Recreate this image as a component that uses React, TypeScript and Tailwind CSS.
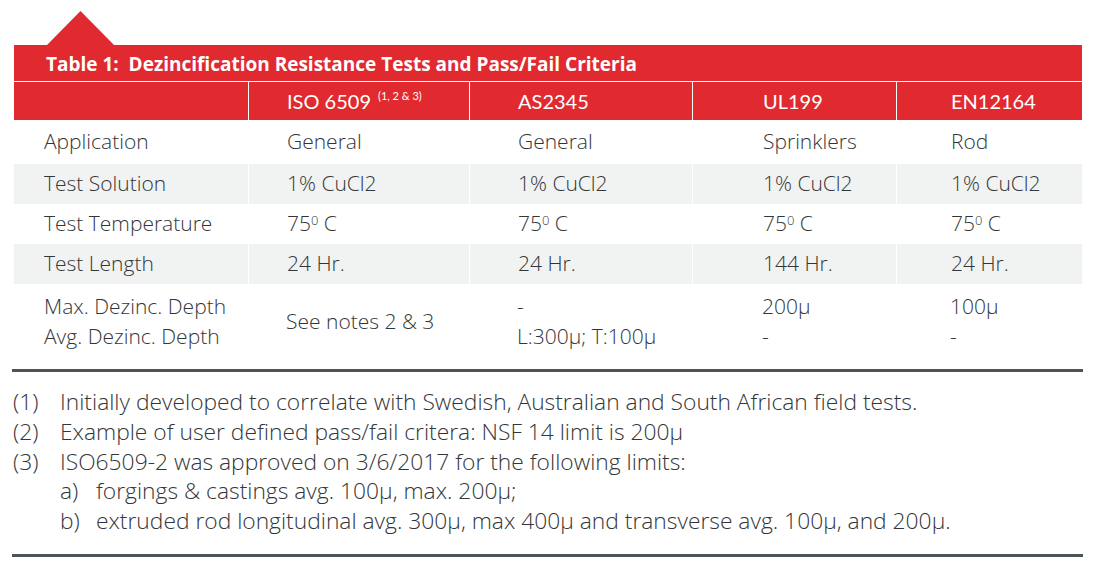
import React from "react";

const lato = { fontFamily: "Lato, 'Noto Sans', sans-serif" };
const open = { fontFamily: "'Open Sans', 'Noto Sans', sans-serif" };

const cols = ["w-[234px] pl-[30px]", "w-[221px] pl-[38px]", "w-[223px] pl-[48px]", "w-[204px] pl-[70px]", "w-[186px] pl-[54px]"];

function Deg() {
  return (
    <span>
      75<sup className="text-[13px]">0</sup> C
    </span>
  );
}

const rows: { cells: React.ReactNode[]; gray: boolean; h: string }[] = [
  { cells: ["Application", "General", "General", "Sprinklers", "Rod"], gray: false, h: "h-[44px]" },
  { cells: ["Test Solution", "1% CuCl2", "1% CuCl2", "1% CuCl2", "1% CuCl2"], gray: true, h: "h-[40px]" },
  { cells: ["Test Temperature", <Deg key="a" />, <Deg key="b" />, <Deg key="c" />, <Deg key="d" />], gray: false, h: "h-[40px]" },
  { cells: ["Test Length", "24 Hr.", "24 Hr.", "144 Hr.", "24 Hr."], gray: true, h: "h-[40px]" },
];

export default function App() {
  return (
    <div className="w-[1095px] h-[576px] bg-white text-[#333638] overflow-hidden" style={lato}>
      <div className="pt-[11px]">
        <div className="ml-[14px] w-[1068px]">
          <div className="pl-[33px] flex">
            <svg width="67" height="34" viewBox="0 0 67 34" className="block">
              <polygon points="0,34 33.5,0 67,34" fill="#e02a30" />
            </svg>
          </div>
          <div
            className="h-[36px] bg-[#e02a30] flex items-center pl-[32px] pt-[2px] text-white font-bold text-[19px] whitespace-pre"
            style={open}
          >
            {"Table 1:  Dezincification Resistance Tests and Pass/Fail Criteria"}
          </div>
          <div className="h-px bg-white" />
          <div className="flex h-[38px] text-white text-[20px]">
            {["", "ISO 6509", "AS2345", "UL199", "EN12164"].map((t, i) => (
              <div
                key={i}
                className={`${cols[i]} bg-[#e02a30] flex items-center ${i > 0 ? "border-l border-white" : ""}`}
              >
                {t}
                {i === 1 && <span className="text-[11px] ml-[7px] -mt-[10px]">(1, 2 &amp; 3)</span>}
              </div>
            ))}
          </div>
          <div className="text-[21px] font-light" style={open}>
            {rows.map((r, ri) => (
              <div key={ri} className={`flex ${r.h}`}>
                {r.cells.map((c, ci) => (
                  <div
                    key={ci}
                    className={`${cols[ci]} flex items-center ${r.gray ? "bg-[#f1f2f2]" : ""} ${ci > 0 ? "border-l border-white" : ""}`}
                  >
                    {c}
                  </div>
                ))}
              </div>
            ))}
            <div className="flex pt-[7px] leading-[30px]">
              <div className={cols[0]}>
                <div>Max. Dezinc. Depth</div>
                <div>Avg. Dezinc. Depth</div>
              </div>
              <div className={`${cols[1]} flex items-center`}>See notes 2 &amp; 3</div>
              <div className={cols[2]}>
                <div>-</div>
                <div>L:300µ; T:100µ</div>
              </div>
              <div className={cols[3]}>
                <div>200µ</div>
                <div>-</div>
              </div>
              <div className={cols[4]}>
                <div>100µ</div>
                <div>-</div>
              </div>
            </div>
          </div>
        </div>
        <div className="ml-[12px] w-[1071px] h-[3px] bg-[#4d5457] mt-[18px]" />
        <div className="ml-[13px] pt-[15px] text-[22.8px] font-light leading-[29.75px]" style={open}>
          <div className="flex">
            <div className="w-[47px]">(1)</div>
            <div>Initially developed to correlate with Swedish, Australian and South African field tests.</div>
          </div>
          <div className="flex">
            <div className="w-[47px]">(2)</div>
            <div>Example of user defined pass/fail critera: NSF 14 limit is 200µ</div>
          </div>
          <div className="flex">
            <div className="w-[47px]">(3)</div>
            <div>ISO6509-2 was approved on 3/6/2017 for the following limits:</div>
          </div>
          <div className="flex pl-[47px]">
            <div className="w-[36px]">a)</div>
            <div>forgings &amp; castings avg. 100µ, max. 200µ;</div>
          </div>
          <div className="flex pl-[47px]">
            <div className="w-[36px]">b)</div>
            <div>extruded rod longitudinal avg. 300µ, max 400µ and transverse avg. 100µ, and 200µ.</div>
          </div>
        </div>
        <div className="ml-[12px] w-[1071px] h-[3px] bg-[#4d5457] mt-[18px]" />
      </div>
    </div>
  );
}
